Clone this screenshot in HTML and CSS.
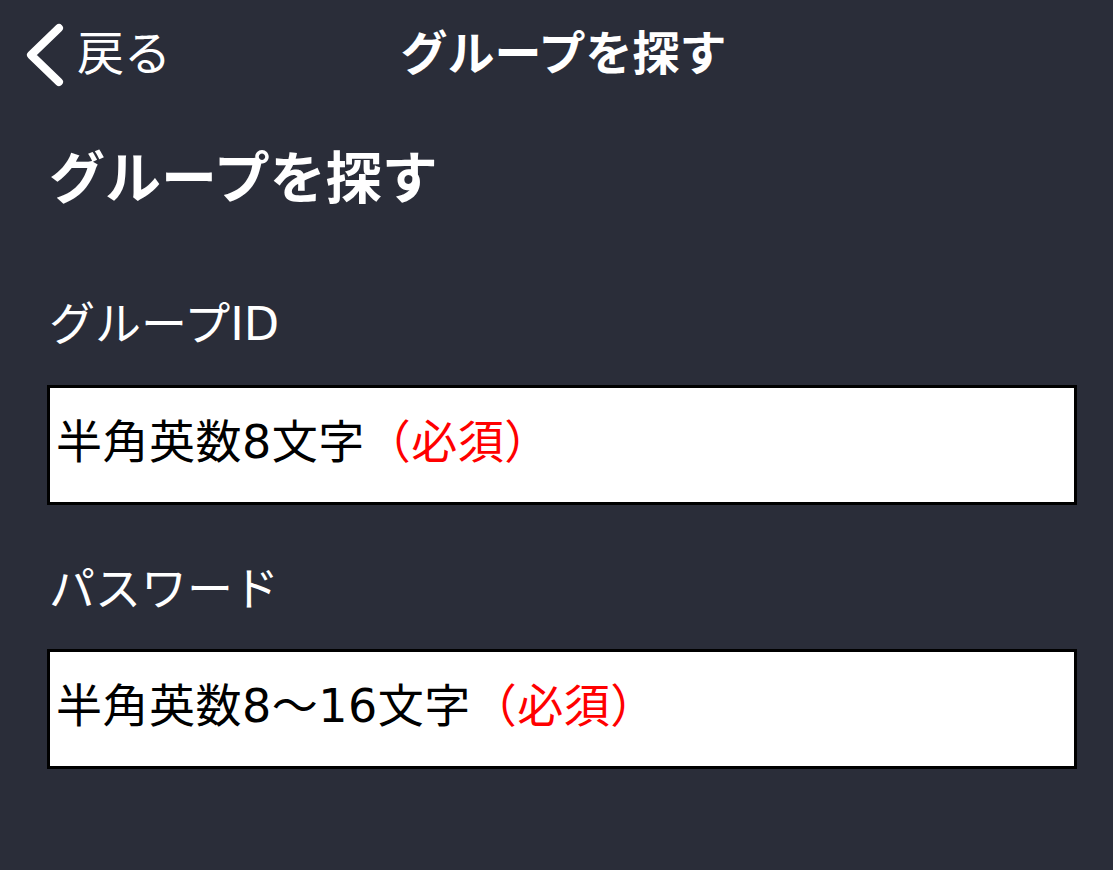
FILE: index.html
```html
<!DOCTYPE html>
<html lang="ja">
<head>
<meta charset="utf-8">
<title>グループを探す</title>
<link rel="stylesheet" href="styles.css">
</head>
<body>
<header class="navbar">
  <div class="nav-back">
    <svg class="chevron" width="40" height="66" viewBox="0 0 40 66" aria-hidden="true">
      <polyline points="34,6 6,33 34,60" fill="none" stroke="#ffffff" stroke-width="8" stroke-linecap="round" stroke-linejoin="round"/>
    </svg>
    <span class="back-label">戻る</span>
  </div>
  <div class="nav-title">グループを探す</div>
  <div class="nav-spacer"></div>
</header>
<main class="content">
  <h1 class="page-title">グループを探す</h1>
  <div class="field">
    <div class="field-label">グループID</div>
    <div class="field-input"><span class="ph">半角英数8文字</span><span class="req">（必須）</span></div>
  </div>
  <div class="field second">
    <div class="field-label">パスワード</div>
    <div class="field-input"><span class="ph">半角英数8〜16文字</span><span class="req">（必須）</span></div>
  </div>
</main>
</body>
</html>
```

FILE: styles.css
```css
html, body {
  margin: 0;
  padding: 0;
}
body {
  background: #2a2d39;
  color: #ffffff;
  font-family: "Liberation Sans", "Noto Sans CJK JP", sans-serif;
  width: 1113px;
  height: 870px;
  overflow: hidden;
}
.navbar {
  height: 110px;
  display: grid;
  grid-template-columns: 1fr auto 1fr;
  align-items: center;
}
.nav-back {
  display: flex;
  align-items: center;
  padding-left: 25px;
  gap: 12px;
}
.chevron {
  display: block;
}
.back-label {
  font-size: 47px;
  line-height: 1;
  font-weight: 400;
  margin-bottom: 4px;
}
.nav-title {
  font-size: 47px;
  line-height: 1;
  font-weight: 700;
  padding-left: 14px;
  margin-bottom: 4px;
}
.content {
  padding: 0 36px 0 47px;
}
.page-title {
  margin: 41px 0 0 0;
  font-size: 56px;
  line-height: 1;
  font-weight: 700;
  padding-left: 2px;
}
.field {
  margin-top: 94px;
}
.field.second {
  margin-top: 61px;
}
.field-label {
  font-family: "DejaVu Sans", "Noto Sans CJK JP", sans-serif;
  font-size: 46px;
  line-height: 1;
  font-weight: 400;
  padding-left: 2px;
}
.field-input {
  margin-top: 38px;
  box-sizing: border-box;
  height: 120px;
  background: #ffffff;
  border: 3px solid #000000;
  display: flex;
  align-items: center;
  padding: 0 0 6px 6px;
  font-family: "DejaVu Sans", "Noto Sans CJK JP", sans-serif;
  font-size: 46px;
  line-height: 1;
  letter-spacing: 0.5px;
  color: #000000;
}
.field.second .field-input {
  margin-top: 37px;
}
.req {
  color: #ff0000;
}
```
